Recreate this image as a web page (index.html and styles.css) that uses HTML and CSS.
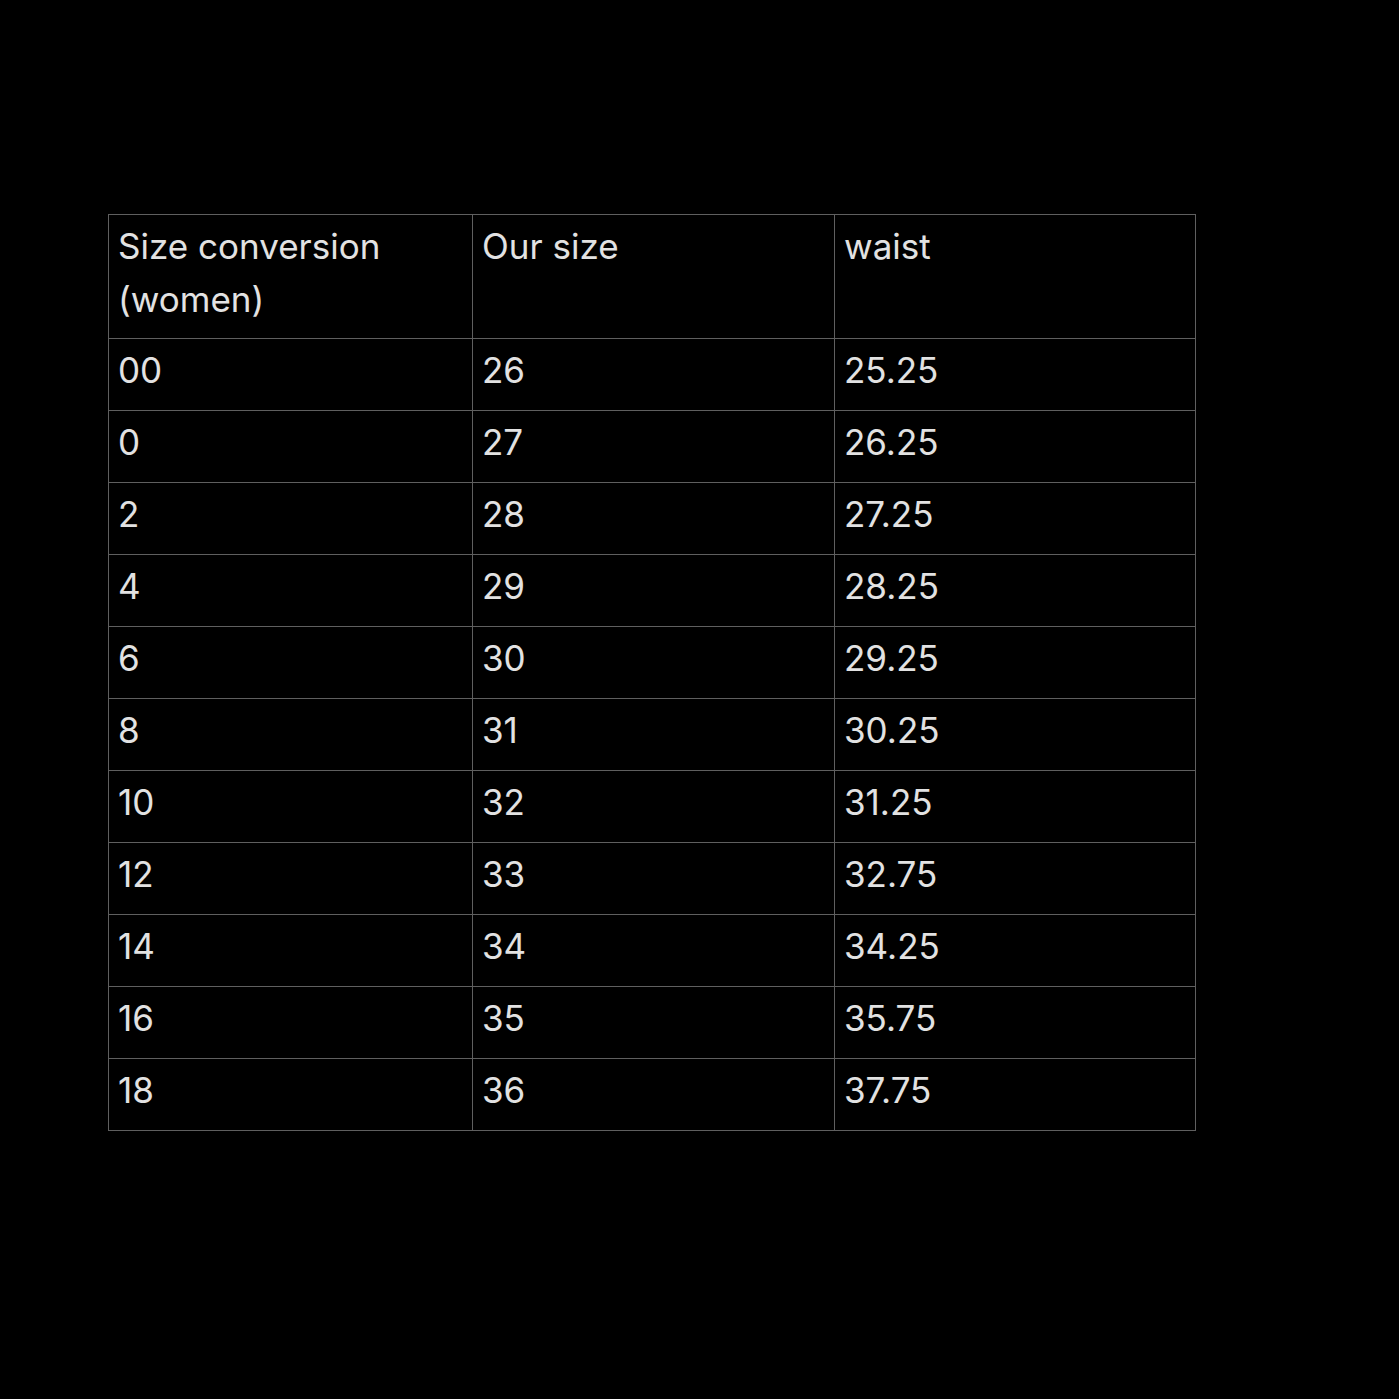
FILE: index.html
```html
<!DOCTYPE html>
<html>
<head>
<meta charset="utf-8">
<link rel="stylesheet" href="styles.css">
</head>
<body>
<div class="page">
<table class="chart">
<colgroup><col class="c1"><col class="c2"><col class="c3"></colgroup>
<tr class="head"><td>Size conversion (women)</td><td>Our size</td><td>waist</td></tr>
<tr><td>00</td><td>26</td><td>25.25</td></tr>
<tr><td>0</td><td>27</td><td>26.25</td></tr>
<tr><td>2</td><td>28</td><td>27.25</td></tr>
<tr><td>4</td><td>29</td><td>28.25</td></tr>
<tr><td>6</td><td>30</td><td>29.25</td></tr>
<tr><td>8</td><td>31</td><td>30.25</td></tr>
<tr><td>10</td><td>32</td><td>31.25</td></tr>
<tr><td>12</td><td>33</td><td>32.75</td></tr>
<tr><td>14</td><td>34</td><td>34.25</td></tr>
<tr><td>16</td><td>35</td><td>35.75</td></tr>
<tr><td>18</td><td>36</td><td>37.75</td></tr>
</table>
</div>
</body>
</html>
```
FILE: styles.css
```css
html, body {
  margin: 0;
  background: #000;
}
.page {
  padding: 214px 0 0 108px;
  height: 1399px;
  box-sizing: border-box;
}
.chart {
  border-collapse: collapse;
  width: 1087px;
  table-layout: fixed;
  font-family: Inter, "Noto Sans", sans-serif;
  font-size: 35px;
  line-height: 53px;
  color: #e2e2e2;
}
.c1 { width: 364px; }
.c2 { width: 362px; }
.c3 { width: 361px; }
.chart td {
  border: 1px solid #5f5f5f;
  padding: 5px 10px 13px 9px;
  vertical-align: top;
  text-align: left;
}
.head td { padding: 5px 60px 12px 9px; }
```
